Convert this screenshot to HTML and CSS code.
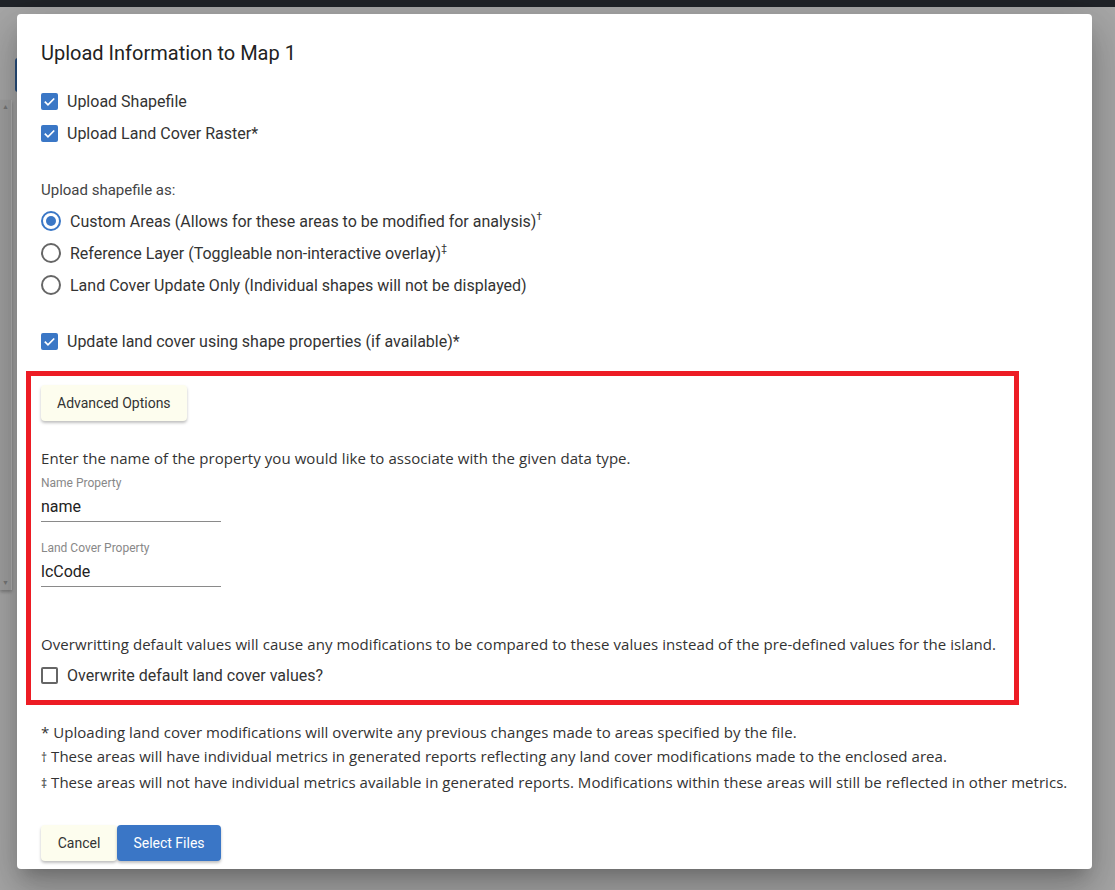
FILE: index.html
```html
<!DOCTYPE html>
<html lang="en">
<head>
<meta charset="utf-8">
<title>Upload Information to Map 1</title>
<link rel="stylesheet" href="styles.css">
</head>
<body>
<div class="topbar"></div>
<div class="page">
  <div class="side-panel"><span class="arr">▲</span><span class="arr">▼</span></div>
  <div class="side-tab"></div>
</div>

<div class="dialog">
  <h2 class="title">Upload Information to Map 1</h2>

  <div class="check-row">
    <span class="cb checked"><svg viewBox="0 0 18 18"><path d="M4 9.2 L7.4 12.6 L14 5.8"/></svg></span>
    <span class="label">Upload Shapefile</span>
  </div>
  <div class="check-row">
    <span class="cb checked"><svg viewBox="0 0 18 18"><path d="M4 9.2 L7.4 12.6 L14 5.8"/></svg></span>
    <span class="label">Upload Land Cover Raster*</span>
  </div>

  <div class="section-label">Upload shapefile as:</div>
  <div class="radios">
    <div class="radio-row">
      <span class="rb selected"><span class="dot"></span></span>
      <span class="label">Custom Areas (Allows for these areas to be modified for analysis)<sup>†</sup></span>
    </div>
    <div class="radio-row">
      <span class="rb"></span>
      <span class="label">Reference Layer (Toggleable non-interactive overlay)<sup>‡</sup></span>
    </div>
    <div class="radio-row">
      <span class="rb"></span>
      <span class="label">Land Cover Update Only (Individual shapes will not be displayed)</span>
    </div>
  </div>

  <div class="check-row gap-top">
    <span class="cb checked"><svg viewBox="0 0 18 18"><path d="M4 9.2 L7.4 12.6 L14 5.8"/></svg></span>
    <span class="label">Update land cover using shape properties (if available)*</span>
  </div>

  <div class="advanced">
    <button class="btn btn-light">Advanced Options</button>
    <p class="note first">Enter the name of the property you would like to associate with the given data type.</p>
    <div class="field">
      <div class="field-label">Name Property</div>
      <div class="field-value">name</div>
    </div>
    <div class="field second">
      <div class="field-label">Land Cover Property</div>
      <div class="field-value">lcCode</div>
    </div>
    <p class="note overwrite">Overwritting default values will cause any modifications to be compared to these values instead of the pre-defined values for the island.</p>
    <div class="check-row tight">
      <span class="cb"></span>
      <span class="label">Overwrite default land cover values?</span>
    </div>
  </div>

  <div class="footnotes">
    <p>* Uploading land cover modifications will overwite any previous changes made to areas specified by the file.</p>
    <p><span class="mark">†</span> These areas will have individual metrics in generated reports reflecting any land cover modifications made to the enclosed area.</p>
    <p><span class="mark">‡</span> These areas will not have individual metrics available in generated reports. Modifications within these areas will still be reflected in other metrics.</p>
  </div>

  <div class="actions">
    <button class="btn btn-light">Cancel</button>
    <button class="btn btn-primary">Select Files</button>
  </div>
</div>
</body>
</html>
```

FILE: styles.css
```css
* { box-sizing: border-box; }
html, body { margin: 0; height: 100%; }
body {
  background: #a7a7a7;
  font-family: Roboto, "Liberation Sans", Arial, sans-serif;
  color: #333;
  position: relative;
  overflow: hidden;
}
.topbar { height: 7px; background: #202328; }
.page { display: flex; align-items: flex-start; }
.side-panel {
  width: 12px;
  height: 490px;
  margin-top: 93px;
  background: #a0a0a0;
  border-right: 1px solid #b2b2b2;
  display: flex;
  flex-direction: column;
  justify-content: space-between;
  align-items: center;
  padding: 3px 0;
  font-size: 7px;
  color: #767676;
  box-shadow: 0 2px 3px rgba(0,0,0,.25);
}
.side-tab {
  width: 6px;
  height: 34px;
  margin-top: 51px;
  margin-left: 3px;
  background: #284f7e;
  border-radius: 3px 0 0 3px;
}

.dialog {
  position: absolute;
  left: 17px;
  top: 14px;
  width: 1075px;
  height: 855px;
  background: #fff;
  border-radius: 4px;
  padding: 23px 24px 0 24px;
  box-shadow: 0 11px 15px -7px rgba(0,0,0,.2), 0 24px 38px 3px rgba(0,0,0,.14), 0 9px 46px 8px rgba(0,0,0,.12);
}
.title {
  margin: 0 0 16px;
  font-size: 20px;
  line-height: 32px;
  font-weight: 400;
  color: #222;
}
.check-row {
  display: flex;
  align-items: center;
  height: 32px;
  gap: 9px;
}
.label { font-size: 16px; color: #333; }
.label sup { font-size: 10px; line-height: 0; vertical-align: 7px; }
.cb {
  width: 17px;
  height: 17px;
  border-radius: 2px;
  border: 2px solid #666;
  display: inline-flex;
  flex: none;
}
.cb.checked { background: #3a77c6; border: none; }
.cb svg { width: 17px; height: 17px; }
.cb svg path { fill: none; stroke: #fff; stroke-width: 1.8; }

.section-label {
  margin-top: 29px;
  font-size: 15px;
  line-height: 24px;
  color: #444;
}
.radios { margin-top: 3px; }
.radio-row { display: flex; align-items: center; height: 32px; gap: 9px; }
.rb {
  width: 20px;
  height: 20px;
  border-radius: 50%;
  border: 2px solid #666;
  display: inline-flex;
  align-items: center;
  justify-content: center;
  flex: none;
}
.rb.selected { border-color: #3a77c6; }
.rb .dot { width: 10px; height: 10px; border-radius: 50%; background: #3a77c6; }
.gap-top { margin-top: 24px; }

.advanced {
  width: 993px;
  margin: 14px 0 0 -15px;
  border: 5px solid #ed1c24;
  padding: 9px 10px 9px;
}
.btn {
  height: 36px;
  border: none;
  border-radius: 4px;
  font-family: Roboto, "Liberation Sans", Arial, sans-serif;
  font-size: 14px;
  padding: 0 16px;
  cursor: pointer;
}
.btn-light {
  background: #fdfdee;
  color: #333;
  box-shadow: 0 2px 3px rgba(0,0,0,.25);
}
.btn-primary {
  background: #3a76c6;
  color: #fff;
  box-shadow: 0 2px 3px rgba(0,0,0,.25);
}
.note {
  margin: 0;
  font-family: "Open Sans", "Noto Sans", sans-serif;
  font-size: 15px;
  letter-spacing: 0.07px;
  line-height: 24px;
  color: #333;
}
.note.first { margin-top: 25px; }
.field { margin-top: 5px; width: 180px; }
.field.second { margin-top: 18px; }
.field-label { font-size: 12px; line-height: 16px; color: #888; }
.field-value {
  margin-top: 4px;
  font-size: 16px;
  line-height: 24px;
  color: #222;
  padding-bottom: 2px;
  border-bottom: 1px solid #8a8a8a;
}
.note.overwrite { margin-top: 45px; }
.tight { margin-top: 3px; }

.footnotes { margin-top: 15px; }
.footnotes p {
  margin: 0;
  font-family: "Open Sans", "Noto Sans", sans-serif;
  font-size: 15px;
  letter-spacing: 0.04px;
  line-height: 24px;
  color: #333;
  white-space: nowrap;
}
.mark { font-size: 12px; }
.actions { margin-top: 29px; display: flex; }
.actions .btn-light { width: 76px; padding: 0; }
.actions .btn-primary { width: 104px; padding: 0; }
```
